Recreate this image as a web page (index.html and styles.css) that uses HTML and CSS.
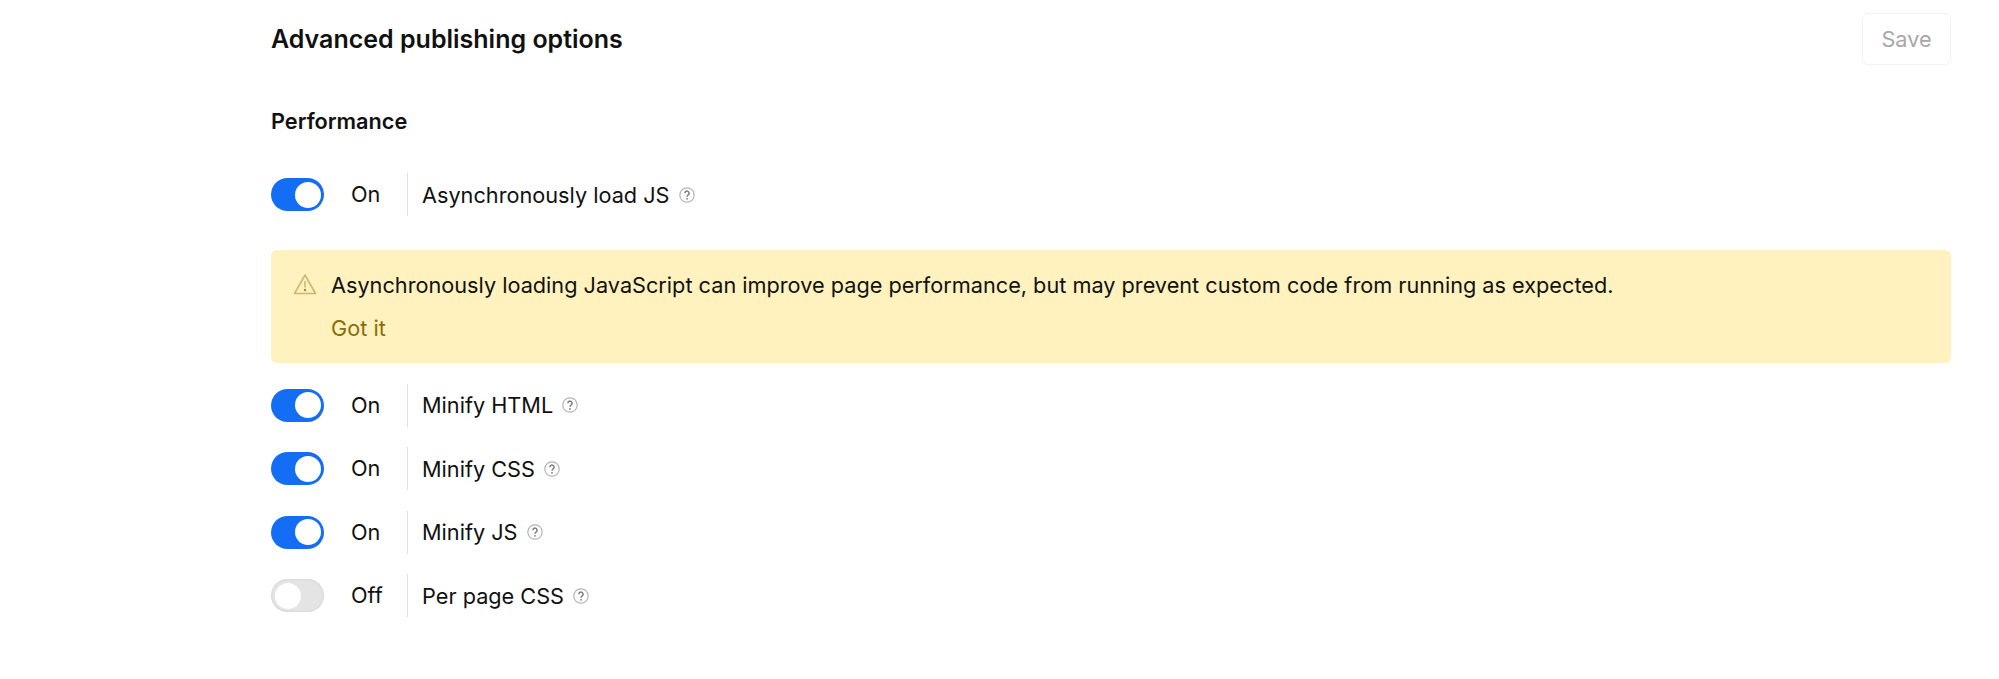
FILE: index.html
```html
<!DOCTYPE html>
<html lang="en">
<head>
    <meta charset="UTF-8">
    <title>Advanced publishing options</title>
    <link rel="stylesheet" href="styles.css">
</head>
<body>
    <main class="panel">
        <header class="panel-header">
            <h1>Advanced publishing options</h1>
            <button class="save-btn" disabled>Save</button>
        </header>

        <h2>Performance</h2>

        <div class="option first">
            <span class="toggle on"><span class="knob"></span></span>
            <span class="state">On</span>
            <span class="name">Asynchronously load JS</span>
            <svg class="help" viewBox="0 0 16 16"><circle cx="8" cy="8" r="7.2"/><path class="mark" d="M5.900 6.200a2.100 2.100 0 1 1 3.300 1.700C8.500 8.400 8 8.800 8 9.700"/><circle class="dot" cx="8" cy="11.800" r="0.900"/></svg>
        </div>

        <div class="alert">
            <svg class="alert-icon" viewBox="0 0 24 22"><path d="M12 2 1.500 20.500h21z"/><path d="M12 8v6.500"/><circle class="dot" cx="12" cy="17" r="1.200"/></svg>
            <div>
                <p>Asynchronously loading JavaScript can improve page performance, but may prevent custom code from running as expected.</p>
                <a class="got-it" href="#">Got it</a>
            </div>
        </div>

        <div class="option">
            <span class="toggle on"><span class="knob"></span></span>
            <span class="state">On</span>
            <span class="name">Minify HTML</span>
            <svg class="help" viewBox="0 0 16 16"><circle cx="8" cy="8" r="7.2"/><path class="mark" d="M5.900 6.200a2.100 2.100 0 1 1 3.300 1.700C8.500 8.400 8 8.800 8 9.700"/><circle class="dot" cx="8" cy="11.800" r="0.900"/></svg>
        </div>
        <div class="option">
            <span class="toggle on"><span class="knob"></span></span>
            <span class="state">On</span>
            <span class="name">Minify CSS</span>
            <svg class="help" viewBox="0 0 16 16"><circle cx="8" cy="8" r="7.2"/><path class="mark" d="M5.900 6.200a2.100 2.100 0 1 1 3.300 1.700C8.500 8.400 8 8.800 8 9.700"/><circle class="dot" cx="8" cy="11.800" r="0.900"/></svg>
        </div>
        <div class="option">
            <span class="toggle on"><span class="knob"></span></span>
            <span class="state">On</span>
            <span class="name">Minify JS</span>
            <svg class="help" viewBox="0 0 16 16"><circle cx="8" cy="8" r="7.2"/><path class="mark" d="M5.900 6.200a2.100 2.100 0 1 1 3.300 1.700C8.500 8.400 8 8.800 8 9.700"/><circle class="dot" cx="8" cy="11.800" r="0.900"/></svg>
        </div>
        <div class="option">
            <span class="toggle"><span class="knob"></span></span>
            <span class="state">Off</span>
            <span class="name">Per page CSS</span>
            <svg class="help" viewBox="0 0 16 16"><circle cx="8" cy="8" r="7.2"/><path class="mark" d="M5.900 6.200a2.100 2.100 0 1 1 3.300 1.700C8.500 8.400 8 8.800 8 9.700"/><circle class="dot" cx="8" cy="11.800" r="0.900"/></svg>
        </div>
    </main>
</body>
</html>
```

FILE: styles.css
```css
body {
    margin: 0;
    background: #fff;
    color: #111;
    font-family: Inter, "Liberation Sans", sans-serif;
    font-size: 21.7px;
}
.panel {
    margin-left: 271px;
    margin-right: 48px;
    padding-top: 13px;
}
.panel-header {
    display: flex;
    justify-content: space-between;
    align-items: center;
    height: 52px;
}
h1 {
    margin: 0;
    font-size: 25px;
    font-weight: 600;
}
h2 {
    margin: 40px 0 0;
    font-size: 21.7px;
    font-weight: 600;
    line-height: 32px;
}
.save-btn {
    width: 89px;
    height: 52px;
    background: #fff;
    border: 1.5px solid #f2f2f2;
    border-radius: 6px;
    color: #a8a8a8;
    font-family: inherit;
    font-size: 21.7px;
}
.option {
    display: flex;
    align-items: center;
    height: 43px;
    margin-bottom: 20.5px;
}
.option.first {
    margin-top: 36px;
    margin-bottom: 34px;
}
.toggle {
    display: flex;
    align-items: center;
    justify-content: flex-start;
    box-sizing: border-box;
    width: 53px;
    height: 33px;
    padding: 3.5px;
    border-radius: 17px;
    background: #e4e4e4;
    box-shadow: inset 0 0 2px rgba(0, 0, 0, 0.15);
}
.toggle.on {
    justify-content: flex-end;
    background: #146ef5;
    box-shadow: none;
}
.knob {
    width: 26px;
    height: 26px;
    border-radius: 50%;
    background: #fff;
}
.state {
    box-sizing: border-box;
    width: 84px;
    height: 43px;
    padding-left: 27px;
    line-height: 43px;
    border-right: 1.5px solid #e0e0e0;
}
.name {
    margin-left: 14px;
}
.help {
    width: 16px;
    height: 16px;
    margin-left: 9px;
    fill: none;
    stroke: #b4b4b4;
    stroke-width: 1.2;
}
.help .mark {
    stroke: #7c7c7c;
    stroke-width: 1.5;
}
.help .dot, .alert-icon .dot {
    fill: #7c7c7c;
    stroke: none;
}
.alert {
    display: flex;
    align-items: flex-start;
    gap: 14px;
    height: 113px;
    box-sizing: border-box;
    margin-bottom: 20.5px;
    padding: 21px 22px;
    background: #fff2bf;
    border-radius: 6px;
}
.alert p {
    margin: 0;
    line-height: 28px;
}
.alert-icon {
    flex: none;
    width: 24px;
    height: 22px;
    margin-top: 2px;
    fill: none;
    stroke: #cdb871;
    stroke-width: 1.6;
    stroke-linejoin: round;
}
.alert-icon .dot {
    fill: #a08a3a;
}
.got-it {
    display: block;
    margin-top: 15px;
    line-height: 28px;
    color: #8a6d06;
    text-decoration: none;
}
```
